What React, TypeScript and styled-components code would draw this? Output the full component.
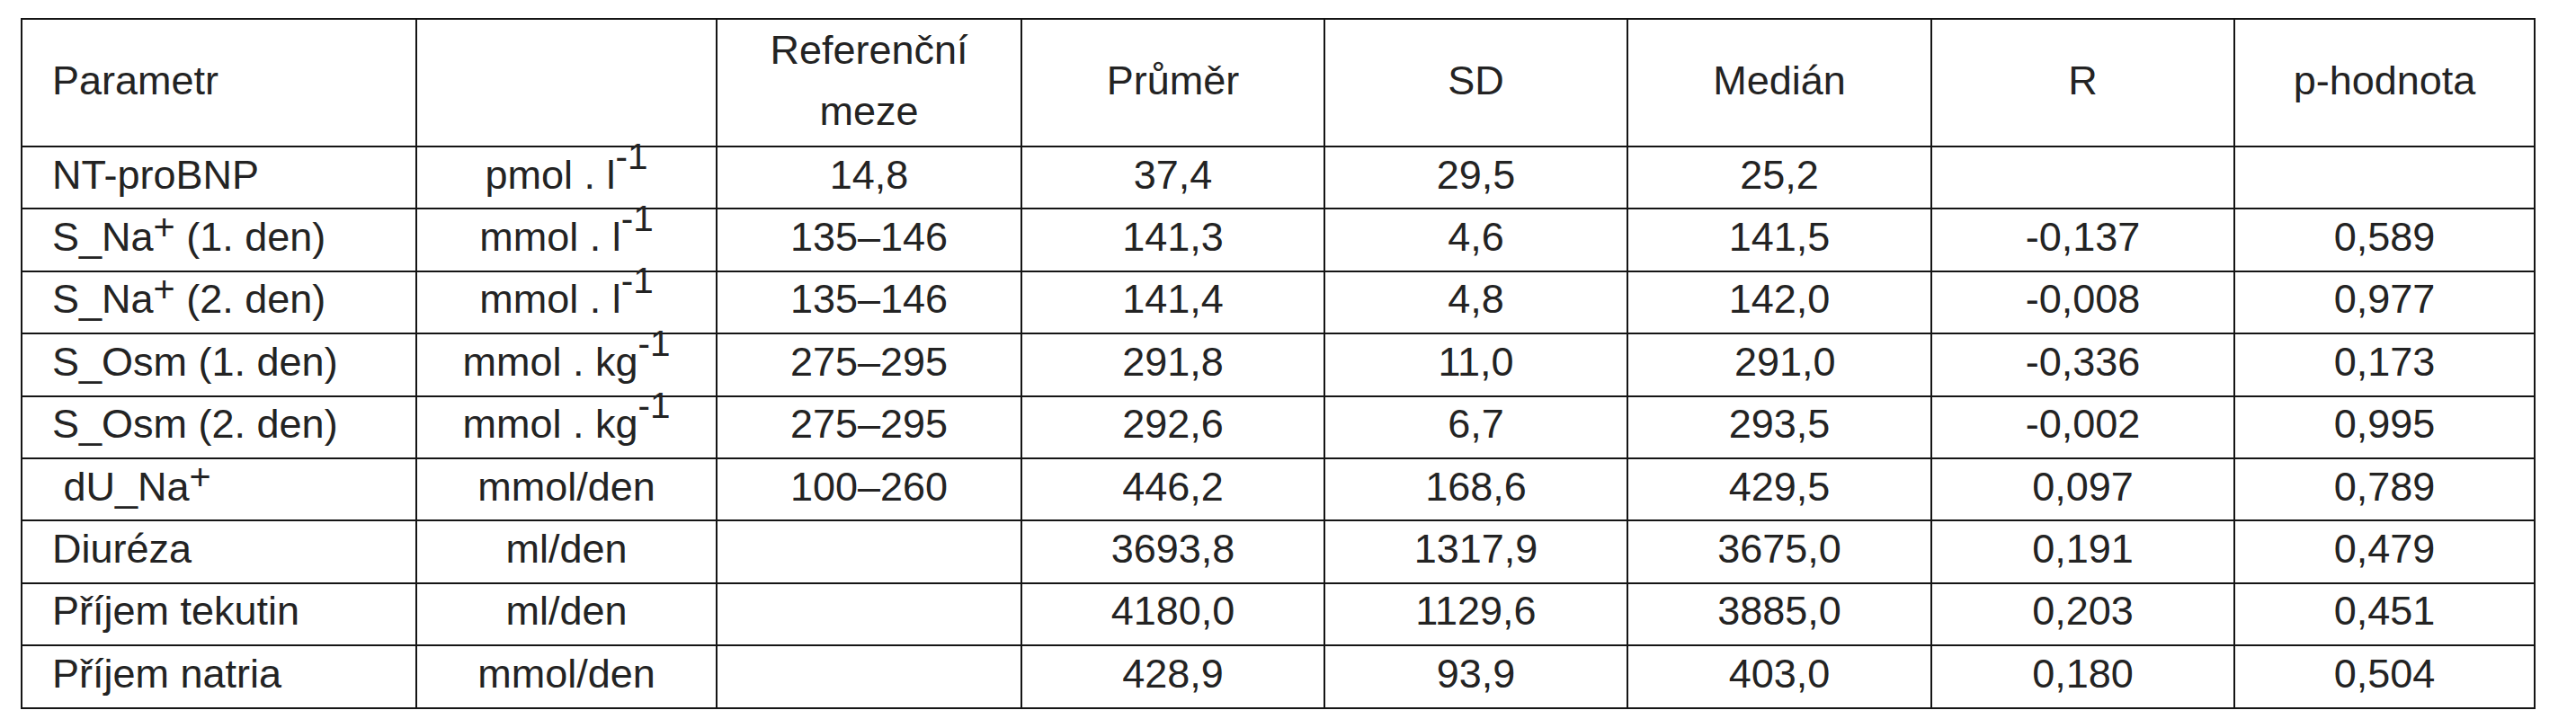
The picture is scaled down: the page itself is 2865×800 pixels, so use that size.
import styled, { createGlobalStyle } from 'styled-components';

type Row = {
  name: React.ReactNode;
  unit: React.ReactNode;
  range: string;
  mean: string;
  sd: string;
  median: string;
  r: string;
  p: string;
};

const GlobalStyle = createGlobalStyle`
  html, body {
    margin: 0;
    padding: 0;
    background: #ffffff;
  }
  body {
    font-family: "Liberation Sans", Arial, sans-serif;
    color: #232323;
  }
`;

const columnWidths = [439, 334, 339, 337, 337, 338, 337, 334];

const Sup = styled.span`
  font-size: 0.9em;
  line-height: 0;
  vertical-align: 0.55em;
`;

const Plus = styled.span`
  font-size: 0.92em;
  line-height: 0;
  vertical-align: 0.3em;
`;

const Unit = ({ base, exp }: { base: string; exp?: string }) => (
  <>
    {base}
    {exp && <Sup>{exp}</Sup>}
  </>
);

const rows: Row[] = [
  {
    name: 'NT-proBNP',
    unit: <Unit base="pmol . l" exp="-1" />,
    range: '14,8',
    mean: '37,4',
    sd: '29,5',
    median: '25,2',
    r: '',
    p: '',
  },
  {
    name: (
      <>
        S_Na<Plus>+</Plus> (1. den)
      </>
    ),
    unit: <Unit base="mmol . l" exp="-1" />,
    range: '135–146',
    mean: '141,3',
    sd: '4,6',
    median: '141,5',
    r: '-0,137',
    p: '0,589',
  },
  {
    name: (
      <>
        S_Na<Plus>+</Plus> (2. den)
      </>
    ),
    unit: <Unit base="mmol . l" exp="-1" />,
    range: '135–146',
    mean: '141,4',
    sd: '4,8',
    median: '142,0',
    r: '-0,008',
    p: '0,977',
  },
  {
    name: 'S_Osm (1. den)',
    unit: <Unit base="mmol . kg" exp="-1" />,
    range: '275–295',
    mean: '291,8',
    sd: '11,0',
    median: ' 291,0',
    r: '-0,336',
    p: '0,173',
  },
  {
    name: 'S_Osm (2. den)',
    unit: <Unit base="mmol . kg" exp="-1" />,
    range: '275–295',
    mean: '292,6',
    sd: '6,7',
    median: '293,5',
    r: '-0,002',
    p: '0,995',
  },
  {
    name: (
      <>
        {' dU_Na'}
        <Plus>+</Plus>
      </>
    ),
    unit: 'mmol/den',
    range: '100–260',
    mean: '446,2',
    sd: '168,6',
    median: '429,5',
    r: '0,097',
    p: '0,789',
  },
  {
    name: 'Diuréza',
    unit: 'ml/den',
    range: '',
    mean: '3693,8',
    sd: '1317,9',
    median: '3675,0',
    r: '0,191',
    p: '0,479',
  },
  {
    name: 'Příjem tekutin',
    unit: 'ml/den',
    range: '',
    mean: '4180,0',
    sd: '1129,6',
    median: '3885,0',
    r: '0,203',
    p: '0,451',
  },
  {
    name: 'Příjem natria',
    unit: 'mmol/den',
    range: '',
    mean: '428,9',
    sd: '93,9',
    median: '403,0',
    r: '0,180',
    p: '0,504',
  },
];

const App = () => {
  return (
    <Page>
      <GlobalStyle />
      <Table>
        <colgroup>
          {columnWidths.map((w, i) => (
            <Col key={i} $width={w} />
          ))}
        </colgroup>
        <thead>
          <HeadRow>
            <HeadCell $left>Parametr</HeadCell>
            <HeadCell />
            <HeadCell>
              Referenční
              <br />
              meze
            </HeadCell>
            <HeadCell>Průměr</HeadCell>
            <HeadCell>SD</HeadCell>
            <HeadCell>Medián</HeadCell>
            <HeadCell>R</HeadCell>
            <HeadCell>p-hodnota</HeadCell>
          </HeadRow>
        </thead>
        <tbody>
          {rows.map((row, i) => (
            <DataRow key={i}>
              <Cell $left>{row.name}</Cell>
              <Cell>{row.unit}</Cell>
              <Cell>{row.range}</Cell>
              <Cell>{row.mean}</Cell>
              <Cell>{row.sd}</Cell>
              <Cell>{row.median}</Cell>
              <Cell>{row.r}</Cell>
              <Cell>{row.p}</Cell>
            </DataRow>
          ))}
        </tbody>
      </Table>
    </Page>
  );
};

export default App;

const Page = styled.div`
  width: 2865px;
  height: 800px;
  box-sizing: border-box;
  padding: 20px 0 0 23px;
  background: #ffffff;
`;

const Table = styled.table`
  border-collapse: collapse;
  table-layout: fixed;
  width: 2795px;
  font-size: 45px;
  border: 2px solid #151515;
`;

const Col = styled.col<{ $width: number }>`
  width: ${({ $width }) => $width}px;
`;

const HeadRow = styled.tr`
  height: 138px;
`;

const DataRow = styled.tr`
  height: 69.4px;
`;

const BaseCell = styled.td<{ $left?: boolean }>`
  border: 2px solid #151515;
  padding: 0 0 0 ${({ $left }) => ($left ? '33px' : '0')};
  text-align: ${({ $left }) => ($left ? 'left' : 'center')};
  vertical-align: middle;
  white-space: pre;
  font-weight: 400;
`;

const HeadCell = styled(BaseCell).attrs({ as: 'th' })`
  line-height: 68px;
  padding-bottom: 4px;
`;

const Cell = styled(BaseCell)`
  line-height: 52px;
  padding-bottom: 6px;
`;
